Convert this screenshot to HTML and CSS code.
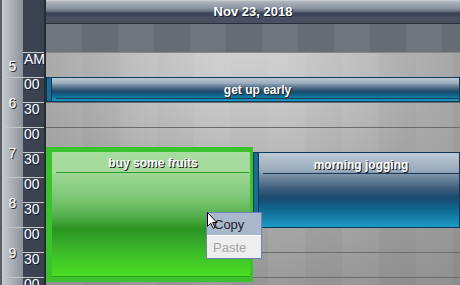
FILE: index.html
```html
<!DOCTYPE html>
<html>
<head>
<meta charset="utf-8">
<link rel="stylesheet" href="styles.css">
</head>
<body>
<div class="cal">
  <div class="timecol">
    <div class="tc-head"></div>
    <div class="hour">
      <div class="hl">5</div>
      <div class="mins"><div class="mn">AM</div></div>
    </div>
    <div class="hour">
      <div class="hl">6</div>
      <div class="mins"><div class="mn">00</div><div class="mn">30</div></div>
    </div>
    <div class="hour">
      <div class="hl">7</div>
      <div class="mins"><div class="mn">00</div><div class="mn">30</div></div>
    </div>
    <div class="hour">
      <div class="hl">8</div>
      <div class="mins"><div class="mn">00</div><div class="mn">30</div></div>
    </div>
    <div class="hour">
      <div class="hl">9</div>
      <div class="mins"><div class="mn">00</div><div class="mn">30</div></div>
    </div>
    <div class="hour last">
      <div class="hl"></div>
      <div class="mins"><div class="mn">00</div></div>
    </div>
  </div>
  <div class="main">
    <div class="head">Nov 23, 2018</div>
    <div class="allday"></div>
    <div class="grid">
      <div class="row"></div><div class="row"></div><div class="row"></div>
      <div class="row"></div><div class="row"></div><div class="row"></div>
      <div class="row"></div><div class="row"></div><div class="row"></div>
      <div class="row"></div>

      <div class="item blue getup">
        <div class="strip"></div>
        <div class="body"><div class="title">get up early</div><div class="sep"></div></div>
      </div>

      <div class="item green fruits">
        <div class="body"><div class="title">buy some fruits</div><div class="sep"></div></div>
      </div>

      <div class="item blue jog">
        <div class="strip"></div>
        <div class="body"><div class="title">morning jogging</div><div class="sep"></div></div>
      </div>
    </div>
  </div>

  <div class="menu">
    <div class="mi sel">Copy</div>
    <div class="mi dis">Paste</div>
  </div>

  <svg class="cursor" width="11" height="17" viewBox="0 0 11 17">
    <path d="M0.5 0.5 L0.5 14.5 L3.8 11.2 L6.2 16.3 L8 15.5 L5.7 10.5 L10 10.5 Z" fill="#fff" stroke="#000" stroke-width="1"/>
  </svg>
</div>
</body>
</html>
```

FILE: styles.css
```css
body {
  margin: 0;
  width: 460px;
  height: 285px;
  overflow: hidden;
  font-family: "Liberation Sans", Arial, sans-serif;
}

.cal {
  position: relative;
  display: flex;
  width: 460px;
  height: 285px;
  overflow: hidden;
}

/* time ruler */
.timecol {
  flex: none;
  width: 42px;
  border-left: 2px solid #5a5e64;
  border-right: 2px solid #262a32;
  background: linear-gradient(90deg, #c6cacf 0, #8c939b 21px, #3c4452 21px, #3a4250 100%);
}

.tc-head {
  height: 53px;
  background: linear-gradient(#c4c8cc, #c4c8cc) no-repeat 21px 52px / 21px 1px;
}

.hour {
  display: flex;
}

.hl {
  width: 21px;
  display: flex;
  align-items: center;
  justify-content: center;
  color: #fff;
  font-size: 14px;
  text-shadow: 1px 1px 0 #2a2a30;
  background: linear-gradient(#c4c8cc, #c4c8cc) no-repeat 4px 100% / 17px 1px;
}

.mins {
  width: 21px;
}

.mn {
  height: 25px;
  box-sizing: border-box;
  border-bottom: 1px solid #c4c8cc;
  color: #fff;
  font-size: 14px;
  line-height: 13px;
  padding-left: 1px;
  text-shadow: 1px 1px 0 #101c40;
  white-space: nowrap;
}

/* main area */
.main {
  flex: 1;
  min-width: 0;
  display: flex;
  flex-direction: column;
}

.head {
  flex: none;
  height: 23px;
  border-bottom: 1px solid #2a2e38;
  background: linear-gradient(#cdd1d5 0, #aab2ba 2px, #8c96a2 8px, #6a7484 11px, #3a4456 13px, #3a4456 16px, #4a5060 17px, #4a5060 100%);
  color: #fff;
  font-weight: bold;
  font-size: 13px;
  line-height: 23px;
  text-align: center;
  text-shadow: 1px 1px 0 #1a1e28;
}

.allday {
  flex: none;
  height: 28px;
  border-bottom: 1px solid #85898f;
  background-color: #6a7078;
  background-image: repeating-linear-gradient(90deg, rgba(255,255,255,.035) 0 36px, rgba(0,0,0,.03) 36px 72px);
}

.grid {
  flex: 1;
  position: relative;
  background-color: #a0a0a0;
  background-image:
    repeating-linear-gradient(90deg, rgba(255,255,255,.05) 0 37px, rgba(0,0,0,0) 37px 74px),
    radial-gradient(ellipse 340px 300px at 200px -20px, #d4d4d4 0%, #c0c0c0 30%, #a4a4a4 60%, #8c8c8c 100%);
}

.row {
  height: 25px;
  box-sizing: border-box;
  border-bottom: 1px solid #6c6c6c;
}

/* items */
.item {
  position: absolute;
  box-sizing: border-box;
  display: flex;
}

.body {
  flex: 1;
  min-width: 0;
}

.title {
  height: 20px;
  box-sizing: border-box;
  padding: 5px 0 0 4px;
  line-height: 14px;
  text-align: center;
  color: #fff;
  font-weight: bold;
  font-size: 12px;
  text-shadow: 1px 1px 0 #202020;
  white-space: nowrap;
}

.sep {
  height: 1px;
  margin-left: 4px;
}

.blue {
  border: 1px solid #0c3a5c;
}

.blue .strip {
  flex: none;
  width: 4px;
  background: #1a6c92;
  border-right: 1px solid #0c3a5c;
}

.blue .body {
  background: linear-gradient(#bcc8d4 0%, #9aaabb 24%, #7a90a6 30%, #3e5e7c 48%, #1a4a6c 60%, #0f6890 76%, #1c9ac6 100%);
}

.blue .sep {
  background: #1a3a58;
}

.getup {
  left: 0;
  top: 24px;
  width: 414px;
  height: 25px;
}

.jog {
  left: 207px;
  top: 99px;
  width: 207px;
  height: 76px;
}

.green {
  left: 0;
  top: 94px;
  width: 207px;
  height: 135px;
  border-style: solid;
  border-color: #3cc22c;
  border-width: 5px 3px 5px 6px;
}

.green .title {
  padding-top: 4px;
}

.green .body {
  border-bottom: 1px solid #28a01c;
  background: linear-gradient(#a8dca0 0%, #a4da9c 17%, #98d490 20%, #80c878 35%, #68bc60 45%, #48a840 55%, #2a9420 62%, #34a828 72%, #40c428 85%, #4ade22 100%);
}

.green .sep {
  background: #2a9a22;
  margin-right: 1px;
}

/* context menu */
.menu {
  position: absolute;
  left: 206px;
  top: 212px;
  width: 56px;
  box-sizing: border-box;
  border: 1px solid #7082b8;
  background: #eeeeee;
  font-size: 13px;
}

.mi {
  height: 22px;
  line-height: 23px;
  padding-left: 7px;
}

.mi.sel {
  background: #a9b8cb;
  color: #1c1c2c;
  border-bottom: 1px solid #ffffff;
}

.mi.dis {
  padding-left: 6px;
  color: #a4a4a4;
}

.cursor {
  position: absolute;
  left: 207px;
  top: 212px;
}
```
